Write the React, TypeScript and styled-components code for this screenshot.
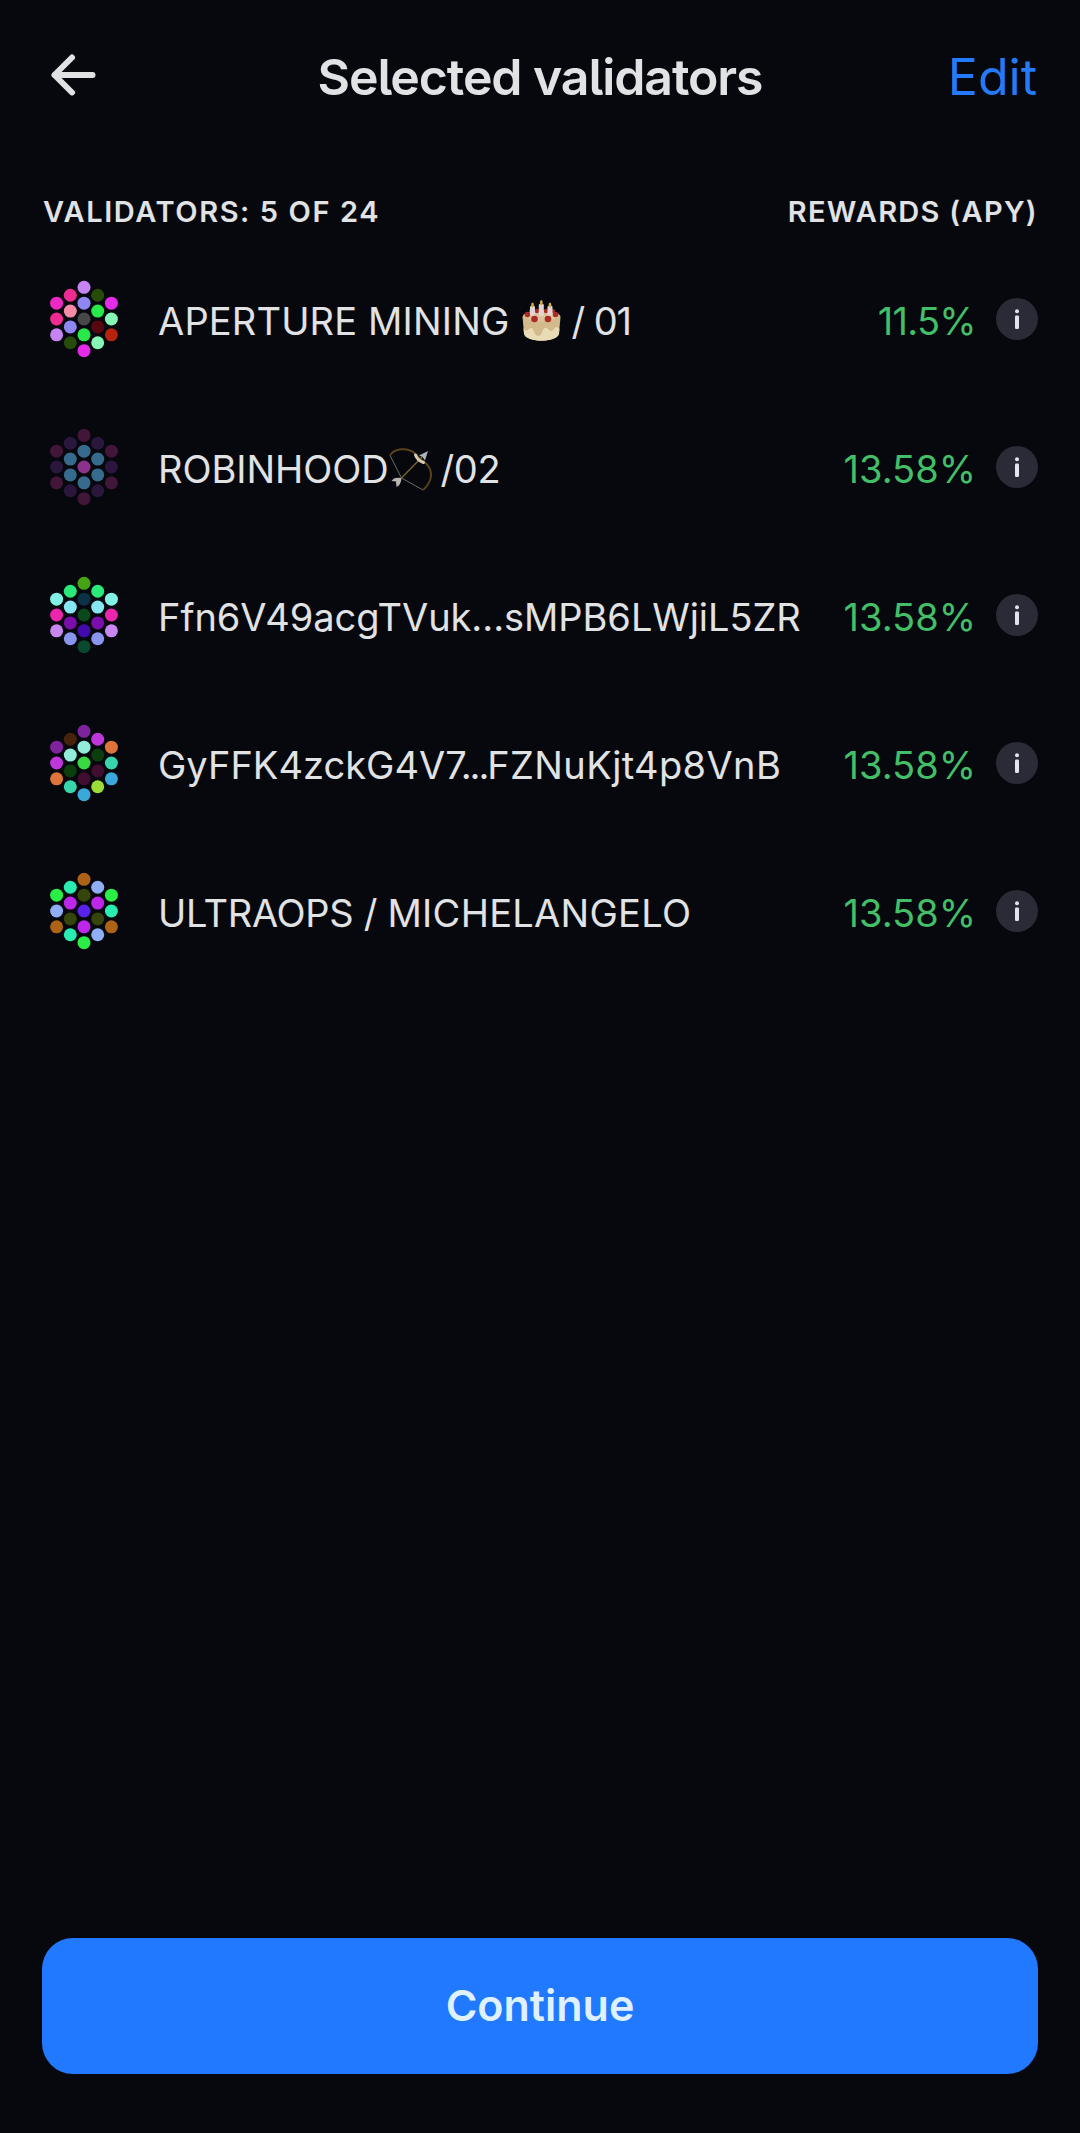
import React from "react";
import styled, { createGlobalStyle } from "styled-components";

const Global = createGlobalStyle`
  body { margin: 0; background: #06080d; }
  * { box-sizing: border-box; }
`;

const Screen = styled.div`
  width: 1080px;
  height: 2133px;
  display: flex;
  flex-direction: column;
  padding: 0 42px 59px;
  background: #06080d;
  color: #e1e2e4;
  font-family: Inter, "Liberation Sans", sans-serif;
  font-feature-settings: "cv05" 1;
`;

const Header = styled.header`
  display: grid;
  grid-template-columns: 200px 1fr 200px;
  align-items: center;
  height: 154px;
`;

const BackButton = styled.button`
  display: flex;
  padding: 0 0 4px;
  border: 0;
  background: none;
  color: inherit;
`;

const Title = styled.h1`
  margin: 0;
  text-align: center;
  white-space: nowrap;
  font-size: 50px;
  font-weight: 600;
  line-height: 60px;
  letter-spacing: -1.1px;
`;

const EditButton = styled.button`
  justify-self: end;
  padding: 0 1px 0 0;
  border: 0;
  background: none;
  color: #237afb;
  font: inherit;
  font-feature-settings: inherit;
  font-size: 50px;
  line-height: 60px;
`;

const ListHeader = styled.div`
  display: flex;
  justify-content: space-between;
  height: 91px;
  padding: 40px 0 0 1px;
`;

const Label = styled.span<{ $track: number }>`
  font-size: 29px;
  font-weight: 600;
  line-height: 36px;
  white-space: nowrap;
  letter-spacing: ${(p) => p.$track}px;
`;

const List = styled.ul`
  flex: 1;
  margin: 0;
  padding: 0;
  list-style: none;
`;

const Row = styled.li`
  display: flex;
  align-items: center;
  height: 148px;
`;

const Name = styled.div`
  flex: 1;
  display: flex;
  align-items: center;
  margin-left: 32px;
  padding-top: 4px;
  font-size: 38px;
  line-height: 48px;
  white-space: pre;
`;

const Part = styled.span<{ $track: number }>`
  letter-spacing: ${(p) => p.$track}px;
`;

const Rate = styled.span<{ $track: number }>`
  padding-top: 4px;
  margin-right: 20px;
  color: #43bf68;
  font-size: 38px;
  line-height: 48px;
  letter-spacing: ${(p) => p.$track}px;
`;

const Emoji = styled.svg<{ $before: number; $after: number }>`
  flex: none;
  display: block;
  margin: 0 ${(p) => p.$after}px 0 ${(p) => p.$before}px;
`;

const InfoButton = styled.button`
  display: flex;
  padding: 0;
  border: 0;
  background: none;
`;

const Continue = styled.button`
  height: 136px;
  padding: 0 0 2px;
  border: 0;
  border-radius: 31px;
  background: #2079ff;
  color: #dff0ff;
  font: inherit;
  font-feature-settings: inherit;
  font-size: 43px;
  font-weight: 600;
`;

/* Slots run column by column, left to right and top to bottom. */
const slots = [3, 4, 5, 4, 3].flatMap((count, col) =>
  Array.from({ length: count }, (_, i) => ({
    x: 42 + (col - 2) * 13.7,
    y: 42 + (i - (count - 1) / 2) * 15.83,
  })),
);

const Identicon = ({ colors }: { colors: string[] }) => (
  <svg width="84" height="84" viewBox="0 0 84 84">
    {slots.map((s, i) => (
      <circle key={i} cx={s.x} cy={s.y} r="6.5" fill={colors[i]} />
    ))}
  </svg>
);

const Cake = () => (
  <Emoji $before={13} $after={10} width="39" height="42" viewBox="0 0 39 42" role="img" aria-label="cake">
    <path d="M0.500 17C1 8 38 8 38.500 17L37 33C36 43 3 43 2 33Z" fill="#d3ba8c" />
    <path d="M1.500 28Q4 33 7 29Q9 27 11 29Q13 36 16 36Q19 36 21 30Q23 26 26 29Q29 33 32 29Q35 25 37.500 29L37 34C35 43 4 43 2 34Z" fill="#e9dbb4" />
    <ellipse cx="19.500" cy="16" rx="16" ry="5.500" fill="#dcc59a" />
    <g fill="#ab2a28">
      <circle cx="5.500" cy="14.500" r="2.800" /><circle cx="9" cy="11" r="2" /><circle cx="15" cy="11" r="2.200" />
      <circle cx="24" cy="11" r="2.200" /><circle cx="31" cy="11" r="2" /><circle cx="33.500" cy="14.500" r="2.800" />
      <circle cx="12.500" cy="19" r="3.300" /><circle cx="26" cy="19" r="3.300" />
    </g>
    <g fill="#e0d5d1">
      <rect x="8" y="6" width="5" height="9.500" rx="1" /><rect x="16.800" y="4" width="5" height="12" rx="1" />
      <rect x="25.500" y="6" width="5" height="9.500" rx="1" />
    </g>
    <g fill="#d7a945">
      <ellipse cx="10.500" cy="5" rx="1.400" ry="2.600" /><ellipse cx="19.300" cy="2.700" rx="1.400" ry="2.700" />
      <ellipse cx="28" cy="5" rx="1.400" ry="2.600" />
    </g>
  </Emoji>
);

const Bow = () => (
  <Emoji $before={0} $after={8} width="44" height="44" viewBox="0 0 44 44" role="img" aria-label="bow and arrow">
    <path d="M1 8.500L12.500 31L34 43" fill="none" stroke="#6d6a67" strokeWidth="1" />
    <path d="M1 8.500C5 1 19 0 26 6.500C30 12 35 14 38.500 18C45 26 42 36 34 43" fill="none" stroke="#5c4419" strokeWidth="1.900" />
    <path d="M12.500 31L33 10" stroke="#77602f" strokeWidth="1.500" />
    <path d="M26.500 8Q28.500 13.500 34.500 15.500" fill="none" stroke="#d5cbb0" strokeWidth="3" strokeLinecap="round" />
    <path d="M39 4L30 8.500L33.500 10L36 13.500Z" fill="#aeb3b6" />
    <path d="M12.500 31Q5 29.500 2.500 34L7 34.500L7.500 40Q12 38 12.500 31Z" fill="#b9b5b0" />
  </Emoji>
);

const InfoIcon = () => (
  <svg width="42" height="42" viewBox="0 0 42 42">
    <circle cx="21" cy="21" r="21" fill="#2a2b37" />
    <circle cx="21" cy="13.200" r="2" fill="#e4e4ea" />
    <rect x="19" y="17.500" width="4" height="13.500" rx="1.200" fill="#e4e4ea" />
  </svg>
);

interface Validator {
  name: React.ReactNode;
  rate: string;
  rateTrack?: number;
  colors: string[];
}

const validators: Validator[] = [
  {
    name: <><Part $track={0.17}>APERTURE MINING</Part><Cake /><Part $track={-1.1}>/ 01</Part></>,
    rate: "11.5%",
    rateTrack: -0.7,
    colors: [
      "#ed28c5", "#ee2b91", "#c684f3",
      "#ee2b91", "#f58ba6", "#8f86f2", "#264b0a",
      "#c684f3", "#8f86f2", "#484848", "#29e849", "#e32be8",
      "#264b0a", "#29e849", "#570710", "#86f5b6",
      "#e32be8", "#86f5b6", "#b5220d",
    ],
  },
  {
    name: <><Part $track={-0.05}>ROBINHOOD</Part><Bow /><Part $track={-0.4}>/02</Part></>,
    rate: "13.58%",
    colors: [
      "#421639", "#2b163e", "#421639",
      "#2b163e", "#376b8d", "#376b8d", "#2b163e",
      "#421639", "#376b8d", "#8d328c", "#376b8d", "#421639",
      "#2b163e", "#376b8d", "#376b8d", "#2b163e",
      "#421639", "#2b163e", "#421639",
    ],
  },
  {
    name: <Part $track={-0.05}>Ffn6V49acgTVuk...sMPB6LWjiL5ZR</Part>,
    rate: "13.58%",
    colors: [
      "#83f2e6", "#eb25ac", "#c787ee",
      "#29e97a", "#86e7f3", "#7b0eaa", "#8995ef",
      "#46a313", "#0b3147", "#0b481c", "#430bad", "#0b4830",
      "#29e97a", "#86e7f3", "#7b0eaa", "#8995ef",
      "#83f2e6", "#eb25ac", "#c787ee",
    ],
  },
  {
    name: (
      <Part $track={0.02}>
        GyFFK4zckG4V<Part $track={-6}>7</Part><Part $track={-2.1}>...</Part><Part $track={0.38}>FZNuKjt4p8VnB</Part>
      </Part>
    ),
    rate: "13.58%",
    colors: [
      "#7e239b", "#bf36db", "#dc743b",
      "#47230b", "#91ecd9", "#0b3d0d", "#38d5ac",
      "#7e239b", "#91ecd9", "#39d742", "#410e32", "#3aa8db",
      "#bf36db", "#0b3d0d", "#410e32", "#9bdc37",
      "#dc743b", "#38d5ac", "#3aa8db",
    ],
  },
  {
    name: <><Part $track={-0.3}>ULTRAOPS / </Part><Part $track={0.28}>MICHELANGELO</Part></>,
    rate: "13.58%",
    colors: [
      "#2aed45", "#8faef5", "#ae6215",
      "#29edb0", "#bd27eb", "#36450b", "#29edb0",
      "#ae6215", "#36450b", "#5822eb", "#bd27eb", "#2aed45",
      "#8faef5", "#bd27eb", "#36450b", "#8faef5",
      "#2aed45", "#29edb0", "#ae6215",
    ],
  },
];

export default function App() {
  return (
    <Screen>
      <Global />
      <Header>
        <BackButton aria-label="Back">
          <svg width="64" height="48" viewBox="0 0 64 48" fill="none" stroke="currentColor" strokeWidth="6" strokeLinecap="round" strokeLinejoin="round">
            <path d="M50.500 24H12.500M30 6.500L12.500 24L30 41.500" />
          </svg>
        </BackButton>
        <Title>Selected validators</Title>
        <EditButton>Edit</EditButton>
      </Header>
      <ListHeader>
        <Label $track={1.6}>VALIDATORS: 5 OF 24</Label>
        <Label $track={1.3}>REWARDS (APY)</Label>
      </ListHeader>
      <List>
        {validators.map((v, i) => (
          <Row key={i}>
            <Identicon colors={v.colors} />
            <Name>{v.name}</Name>
            <Rate $track={v.rateTrack ?? 0}>{v.rate}</Rate>
            <InfoButton aria-label="Info"><InfoIcon /></InfoButton>
          </Row>
        ))}
      </List>
      <Continue>Continue</Continue>
    </Screen>
  );
}
